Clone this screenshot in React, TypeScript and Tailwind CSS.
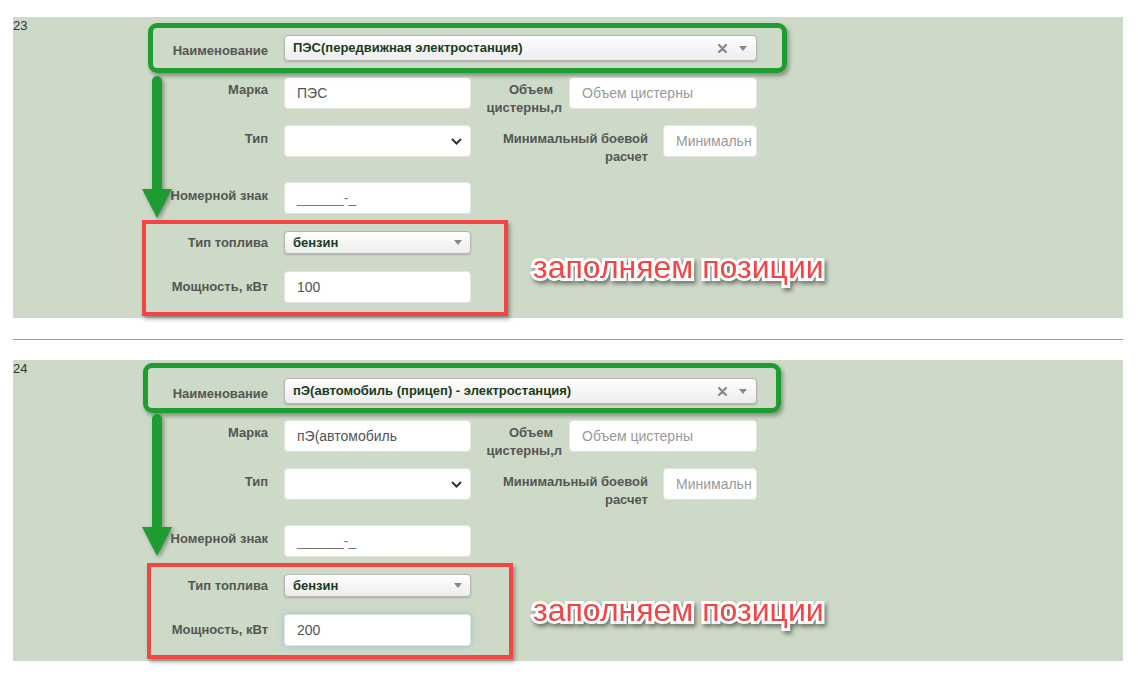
import React from 'react';

interface EntryProps {
  num: string;
  name: string;
  brand: string;
  power: string;
  focused?: boolean;
  green: { left: string; top: string; width: string };
  red: { left: string };
  arrowTop: string;
}

function Cross() {
  return (
    <svg width="9" height="9" viewBox="0 0 9 9" className="text-[#888]">
      <path d="M1 1L8 8M8 1L1 8" stroke="currentColor" strokeWidth="2.2" strokeLinecap="round" />
    </svg>
  );
}

function Caret() {
  return (
    <svg width="8" height="5" viewBox="0 0 8 5" className="text-[#888]">
      <path d="M0 0H8L4 5Z" fill="currentColor" />
    </svg>
  );
}

function Chevron() {
  return (
    <svg width="11" height="7" viewBox="0 0 11 7" className="text-[#333]">
      <path d="M1.5 1.5L5.5 5.5L9.5 1.5" stroke="currentColor" strokeWidth="2" fill="none" strokeLinecap="round" />
    </svg>
  );
}

function Entry({ num, name, brand, power, focused, green, red, arrowTop }: EntryProps) {
  const label = 'w-[120px] shrink-0 text-right text-[13px] font-bold leading-[18px] text-[#555]';
  const input = 'h-[32px] rounded-[4px] border border-[#e2e6df] bg-white pl-[12px] flex items-center text-[14px]';

  return (
    <div className="relative ml-[13px] w-[1110px] bg-[#cedac8] pb-[15px]">
      <div className="h-[18px] text-[13px] leading-[18px] text-[#333]">{num}</div>

      <div className="pl-[135px]">
        {/* Наименование */}
        <div className="flex h-[26px]">
          <div className={`${label} pt-[7px]`}>Наименование</div>
          <div className="ml-[16px] flex h-[26px] w-[473px] items-center rounded-[4px] border border-[#b5b5b5] bg-linear-to-b from-white to-[#ececec] pl-[8px] pr-[9px] shadow-[0_1px_2px_rgba(0,0,0,0.2)]">
            <span className="text-[13px] font-bold text-[#183d1c]">{name}</span>
            <span className="ml-auto mr-[12px] flex"><Cross /></span>
            <Caret />
          </div>
        </div>

        {/* Марка / Объем */}
        <div className="mt-[16px] flex h-[32px]">
          <div className={`${label} pt-[4px]`}>Марка</div>
          <div className={`${input} ml-[16px] w-[187px] text-[#555]`}>{brand}</div>
          <div className="w-[91px] shrink-0 text-right text-[13px] font-bold leading-[18px] text-[#555] pt-[4px]">
            <span className="block pr-[9px]">Объем</span>
            <span className="block">цистерны,л</span>
          </div>
          <div className={`${input} ml-[7px] w-[188px] text-[#999]`}>Объем цистерны</div>
        </div>

        {/* Тип / Минимальный */}
        <div className="mt-[16px] flex h-[32px]">
          <div className={`${label} pt-[5px]`}>Тип</div>
          <div className={`${input} ml-[16px] w-[187px] justify-end pr-[8px]`}>
            <Chevron />
          </div>
          <div className="w-[177px] shrink-0 text-right text-[13px] font-bold leading-[18px] text-[#555] pt-[5px]">
            <span className="block">Минимальный боевой</span>
            <span className="block">расчет</span>
          </div>
          <div className={`${input} ml-[15px] w-[94px] text-[#999]`}>Минимальн</div>
        </div>

        {/* Номерной знак */}
        <div className="mt-[25px] flex h-[32px]">
          <div className={`${label} pt-[5px]`}>Номерной знак</div>
          <div className={`${input} ml-[16px] w-[187px] text-[#777]`}>______-_</div>
        </div>

        {/* Тип топлива */}
        <div className="mt-[17px] flex h-[23px]">
          <div className={`${label} pt-[3px]`}>Тип топлива</div>
          <div className="ml-[16px] flex h-[23px] w-[187px] items-center rounded-[4px] border border-[#b5b5b5] bg-linear-to-b from-white to-[#ececec] pl-[8px] pr-[8px] shadow-[0_1px_2px_rgba(0,0,0,0.2)]">
            <span className="text-[13px] font-bold text-[#183d1c]">бензин</span>
            <span className="ml-auto flex"><Caret /></span>
          </div>
        </div>

        {/* Мощность */}
        <div className="mt-[17px] flex h-[32px]">
          <div className={`${label} pt-[7px]`}>Мощность, кВт</div>
          <div
            className={`${input} ml-[16px] w-[187px] text-[#555] ${
              focused ? 'border-[#66afe9] shadow-[0_0_6px_rgba(102,175,233,0.6)]' : ''
            }`}
          >
            {power}
          </div>
        </div>
      </div>

      {/* annotations */}
      <div
        className="absolute h-[50px] rounded-[9px] border-[5px] border-[#1e9c31] shadow-[2px_3px_4px_rgba(0,0,0,0.35)]"
        style={{ left: green.left, top: green.top, width: green.width }}
      />
      <svg
        className="absolute left-[129px] drop-shadow-[2px_2px_2px_rgba(0,0,0,0.35)]"
        style={{ top: arrowTop }}
        width="31"
        height="142"
        viewBox="0 0 31 142"
      >
        <path d="M10 5 A5 5 0 0 1 20 5 V113 H30 L15 142 L0 113 H10 Z" fill="#1e9c31" />
      </svg>
      <div
        className="absolute top-[203px] h-[96px] w-[366px] border-[4px] border-[#f44545] shadow-[2px_3px_4px_rgba(0,0,0,0.35)]"
        style={{ left: red.left }}
      />
      <div className="absolute left-[520px] top-[232px] text-[32px] leading-[36px] text-[#f44545] [-webkit-text-stroke:6px_white] [paint-order:stroke_fill] drop-shadow-[2px_3px_2px_rgba(0,0,0,0.45)]">
        заполняем позиции
      </div>
    </div>
  );
}

export default function App() {
  return (
    <div className="min-h-[680px] bg-white pt-[17px] font-['Liberation_Sans',Arial,sans-serif]">
      <Entry
        num="23"
        name="ПЭС(передвижная электростанция)"
        brand="ПЭС"
        power="100"
        green={{ left: '135px', top: '6px', width: '639px' }}
        red={{ left: '129px' }}
        arrowTop="59px"
      />
      <div className="ml-[13px] mt-[21px] mb-[20px] h-px w-[1110px] bg-[#9a9a9a]" />
      <Entry
        num="24"
        name="пЭ(автомобиль (прицеп) - электростанция)"
        brand="пЭ(автомобиль"
        power="200"
        focused
        green={{ left: '130px', top: '3px', width: '638px' }}
        red={{ left: '134px' }}
        arrowTop="54px"
      />
    </div>
  );
}
